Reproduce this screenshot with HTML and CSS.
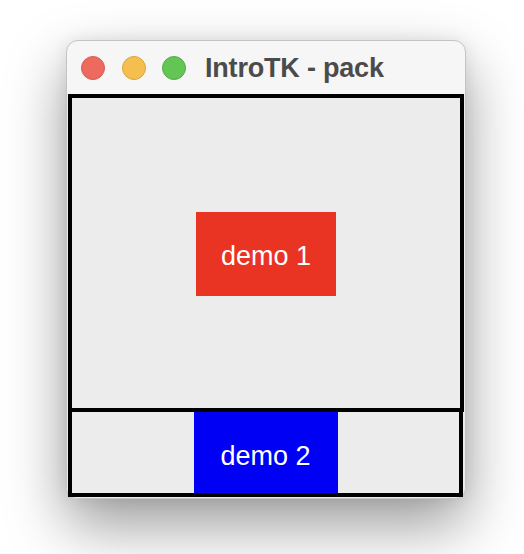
FILE: index.html
```html
<!DOCTYPE html>
<html>
<head>
<meta charset="utf-8">
<link rel="stylesheet" href="styles.css">
</head>
<body>
<div class="stage">
  <div class="window">
    <div class="titlebar">
      <div class="lights">
        <span class="light red"></span>
        <span class="light yellow"></span>
        <span class="light green"></span>
      </div>
      <div class="title">IntroTK - pack</div>
    </div>
    <div class="content">
      <div class="frame frame1">
        <div class="label red-label">demo 1</div>
      </div>
      <div class="frame frame2">
        <div class="label blue-label">demo 2</div>
      </div>
    </div>
  </div>
</div>
</body>
</html>
```
FILE: styles.css
```css
html, body {
  margin: 0;
  padding: 0;
}
body {
  background: #ffffff;
  width: 524px;
  height: 554px;
  overflow: hidden;
}
.stage {
  padding: 40px 0 0 66px;
}
.window {
  width: 400px;
  box-sizing: border-box;
  border: 1px solid #c4c4c4;
  border-radius: 12px;
  background: #f6f6f6;
  box-shadow: 0 26px 60px rgba(0, 0, 0, 0.4), 0 0 16px rgba(0, 0, 0, 0.08);
}
.titlebar {
  height: 53px;
  display: flex;
  align-items: center;
  padding-left: 14px;
}
.lights {
  display: flex;
  gap: 16.5px;
}
.light {
  width: 24px;
  height: 24px;
  border-radius: 50%;
  box-sizing: border-box;
  display: block;
}
.red {
  background: #ee6a5f;
  border: 1px solid #d65c51;
}
.yellow {
  background: #f5bf4f;
  border: 1px solid #d9a53f;
}
.green {
  background: #62c554;
  border: 1px solid #53ab47;
}
.title {
  margin-left: 19px;
  font-family: "Liberation Sans", Arial, sans-serif;
  font-weight: bold;
  font-size: 27px;
  letter-spacing: -0.2px;
  color: #4b4b4b;
  line-height: 1;
  padding-top: 1px;
}
.content {
  padding: 0 0 1px 1px;
  background: #ececec;
  border-radius: 0 0 11px 11px;
}
.frame {
  border: 4px solid #000;
  box-sizing: border-box;
  background: #ececec;
  display: flex;
  align-items: center;
  justify-content: center;
  position: relative;
}
.frame1 {
  width: 396px;
  height: 318px;
  padding-top: 2px;
}
.frame2 {
  width: 395px;
  height: 89px;
  margin-top: -4px;
  align-items: stretch;
}
.label {
  font-family: "Liberation Sans", Arial, sans-serif;
  font-size: 27px;
  color: #fff;
  display: flex;
  align-items: center;
  justify-content: center;
}
.red-label {
  width: 140px;
  height: 84px;
  background: #e93323;
  box-sizing: border-box;
  padding-top: 4px;
}
.blue-label {
  width: 144px;
  background: #0000f5;
  box-sizing: border-box;
  padding-top: 8px;
}
```
